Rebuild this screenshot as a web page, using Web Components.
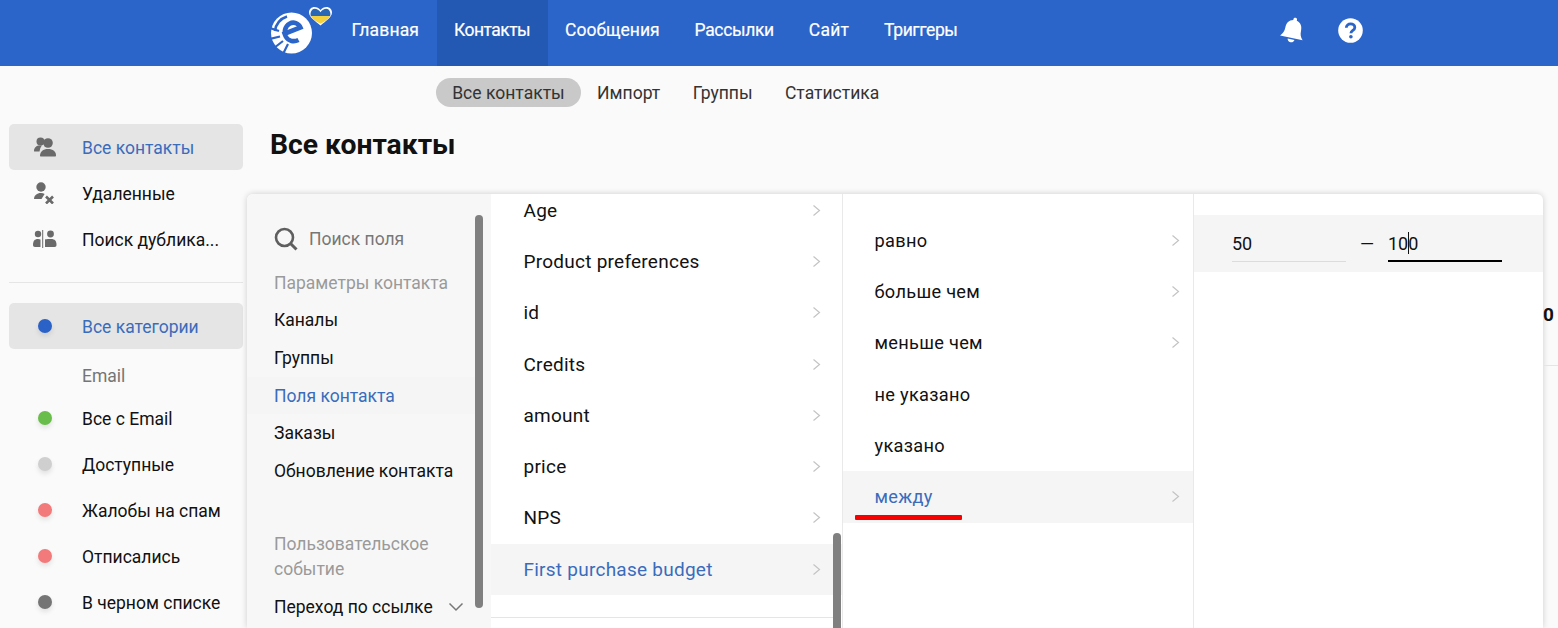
<!DOCTYPE html>
<html lang="ru"><head><meta charset="utf-8"><title>Все контакты</title>
<style>
html,body{margin:0;height:628px;overflow:hidden;background:#fafafa;font-family:Roboto,"Noto Sans",sans-serif}
</style></head><body>
<app-shell>
  <top-bar></top-bar>
  <sub-nav>
    <sub-link active>Все контакты</sub-link><sub-link>Импорт</sub-link><sub-link>Группы</sub-link><sub-link>Статистика</sub-link>
  </sub-nav>
  <side-menu slot="side">
    <side-item active icon="people">Все контакты</side-item>
    <side-item icon="deleted">Удаленные</side-item>
    <side-item icon="dupes">Поиск дублика...</side-item>
    <side-rule></side-rule>
    <side-item active dot="#2b62c8">Все категории</side-item>
    <side-head>Email</side-head>
    <side-item dot="#69bd4a">Все с Email</side-item>
    <side-item dot="#cfcfcf">Доступные</side-item>
    <side-item dot="#f27a7a">Жалобы на спам</side-item>
    <side-item dot="#f27a7a">Отписались</side-item>
    <side-item dot="#757575">В черном списке</side-item>
  </side-menu>
  <page-title slot="title">Все контакты</page-title>
  <filter-panel slot="panel">
    <field-nav slot="a"></field-nav>
    <opt-list slot="b" scrolled>
      <opt-row latin>Age</opt-row><opt-row latin>Product preferences</opt-row><opt-row latin>id</opt-row><opt-row latin>Credits</opt-row><opt-row latin>amount</opt-row><opt-row latin>price</opt-row><opt-row latin>NPS</opt-row><opt-row latin active>First purchase budget</opt-row>
    </opt-list>
    <opt-list slot="c">
      <opt-row>равно</opt-row><opt-row>больше чем</opt-row><opt-row>меньше чем</opt-row><opt-row plain>не указано</opt-row><opt-row plain>указано</opt-row><opt-row active marked>между</opt-row>
    </opt-list>
    <range-row slot="d"></range-row>
  </filter-panel>
</app-shell>
<script>
function def(name, css, html, extra){
  const tpl=document.createElement('template');
  tpl.innerHTML='<style>'+css+'</style>'+html;
  customElements.define(name,class extends HTMLElement{
    constructor(){super();this.attachShadow({mode:'open'}).appendChild(tpl.content.cloneNode(true));}
    connectedCallback(){ if(extra) extra(this,this.shadowRoot); }
  });
}
const G='#6a6a6a';
const ICON={
people:`<svg width="22" height="20" viewBox="0 0 22 20"><circle cx="6.500" cy="4.500" r="4" fill="${G}"/><path d="M0 14c0-3.500 2.700-5.500 5.500-5.500H8C6.500 10 6 11.800 5.500 14.500H1.500C.7 14.500 0 14.800 0 14z" fill="${G}"/><circle cx="14" cy="6" r="4.800" fill="${G}"/><path d="M7 19.500c-.6 0-1-.4-1-1 .4-4 3-6.500 8-6.500s8 2.500 8 6.500c0 .6-.4 1-1 1z" fill="${G}"/></svg>`,
deleted:`<svg width="22" height="22" viewBox="0 0 22 22"><circle cx="7" cy="5" r="4.700" fill="${G}"/><path d="M0 17c0-3.500 3-6 7-6 1.500 0 2.600.3 3.600.9L7.500 17z" fill="${G}"/><path d="M12 14.500l7 7m0-7l-7 7" stroke="${G}" stroke-width="2.600" fill="none"/></svg>`,
dupes:`<svg width="24" height="18" viewBox="0 0 24 18"><circle cx="5" cy="4" r="3.200" fill="${G}"/><path d="M0 15c0-4 1.500-6 5-6 1 0 1.600 .2 2.500 .6V17H2c-1.300 0-2-.8-2-2z" fill="${G}"/><circle cx="17.500" cy="4" r="3.400" fill="${G}"/><path d="M12 9.600c1-.4 2-.6 4-.6h2c4 0 5.500 2 5.500 6 0 1.300-.7 2-2 2H12z" fill="${G}"/><rect x="9.200" y="0" width="1" height="18" fill="${G}"/></svg>`
};
const CHEV='<svg width="9" height="13" viewBox="0 0 9 13"><path d="M1.500 1.500l6 5-6 5" fill="none" stroke="#c4c4c4" stroke-width="1.200"/></svg>';

def('app-shell',`
:host{display:block;height:628px}
.body{display:flex;align-items:flex-start}
.side{width:247px;flex:none;padding:17px 0 0 9px;box-sizing:border-box}
.main{flex:1;min-width:0}
`,`<slot></slot>
<div class="body">
 <div class="side"><slot name="side"></slot></div>
 <div class="main"><slot name="title"></slot><slot name="panel"></slot></div>
</div>`);

def('top-bar',`
:host{display:flex;height:66px;background:#2b65c9;color:#fff;font:400 17.5px/61px Roboto,sans-serif;padding-left:270px;box-sizing:border-box;align-items:stretch}
.logo{width:64px;flex:none;display:block}
nav{display:flex}
a{padding:0 17.500px;color:#fff;text-decoration:none;display:block;-webkit-text-stroke:.2px #fff}
a.on{background:#2459b3}
.tools{display:flex;align-items:center;margin-left:auto;padding:0 195px 6px 0;gap:32px}
svg{display:block}
`,`<svg class="logo" width="64" height="66" viewBox="0 0 64 66">
  <circle cx="21.500" cy="33" r="20.500" fill="#fff"/>
  <path d="M5 31A17 17 0 0 1 17 16.500" stroke="#2b65c9" stroke-width="2.600" fill="none"/>
  <path d="M0 28l9 3M0 39l10-2.500M4 48l9-7M13 54l5-10" stroke="#2b65c9" stroke-width="2.200" fill="none"/>
  <path d="M12.500 34.500 30.500 27.500c-1.800-4.500-7-6-11-3.800-4.500 2.500-6 8.800-3.500 13.300 2.500 4.300 8 5.200 12.500 3" fill="none" stroke="#2b65c9" stroke-width="4.600"/>
  <path d="M50.500 25.500C45 21 39 17 39 12.500c0-3.300 2.500-5.500 5.500-5.500 2.300 0 4.500 1.200 6 3 1.500-1.800 3.700-3 6-3 3 0 5.500 2.200 5.500 5.500C62 17 56 21 50.500 25.500z" fill="#fff"/>
  <path d="M40.800 16c-1-3.800 1.300-7.200 3.900-7.200 2.200 0 4.500 1.300 5.800 3.400 1.300-2.100 3.600-3.400 5.800-3.400 2.600 0 4.900 3.400 3.900 7.200z" fill="#2a67b4"/>
  <path d="M40.800 16h19.400c-1.200 2.700-5.200 5.500-9.700 7.800-4.500-2.300-8.500-5.100-9.700-7.800z" fill="#f4d13d"/>
</svg>
<nav><a style="letter-spacing:.15px">Главная</a><a class="on" style="letter-spacing:-.55px">Контакты</a><a>Сообщения</a><a style="letter-spacing:-.35px">Рассылки</a><a style="letter-spacing:.2px">Сайт</a><a style="letter-spacing:-.4px">Триггеры</a></nav>
<div class="tools">
<svg width="26" height="28" viewBox="0 0 26 28"><g transform="rotate(12 13 14)"><path d="M13 1.500c1 0 1.800.7 1.800 1.700v1C19 5.200 21 8.500 21 13c0 4 1 6.500 3.500 9H1.500C4 19.500 5 17 5 13c0-4.500 2-7.800 6.200-8.800v-1c0-1 .8-1.700 1.800-1.700z" fill="#fff"/><path d="M9.500 23.500h7c-.3 1.800-1.700 3-3.500 3s-3.200-1.200-3.500-3z" fill="#fff"/></g></svg>
<svg width="25" height="25" viewBox="0 0 25 25"><circle cx="12.500" cy="12.500" r="12.300" fill="#fff"/><path d="M8.300 9.800c0-2.400 1.900-3.900 4.300-3.900 2.500 0 4.200 1.500 4.200 3.500 0 3-3.900 3-3.900 5.900" fill="none" stroke="#2b65c9" stroke-width="2.800"/><circle cx="12.900" cy="18.800" r="1.800" fill="#2b65c9"/></svg>
</div>`);

def('sub-nav',`:host{display:flex;height:29px;margin-top:12px;padding-left:436px;align-items:stretch}`,`<slot></slot>`);
def('sub-link',`
:host{display:block;padding:0 16.200px;border-radius:15px;font:400 17.550px/30px Roboto,sans-serif;color:#333}
:host([active]){background:#c9c9c9}
`,`<slot></slot>`);

def('side-menu',`:host{display:block;width:234px}`,`<slot></slot>`);
def('side-item',`
:host{display:flex;height:46px;padding-top:2px;box-sizing:border-box;align-items:center;border-radius:5px;font:400 17.5px/44px Roboto,sans-serif;color:#111;white-space:nowrap}
:host([active]){background:#e5e5e5;color:#3a6cbc}
.ic{width:73px;flex:none;display:flex;justify-content:center;padding:0 1px 2px 0;box-sizing:border-box}
.ic span{width:14px;height:14px;border-radius:50%;display:block;box-shadow:0 3px 5px rgba(0,0,0,.1)}
svg{display:block}
`,`<div class="ic"></div><slot></slot>`,(el,sr)=>{
  const ic=sr.querySelector('.ic');
  if(el.hasAttribute('dot')) ic.innerHTML='<span style="background:'+el.getAttribute('dot')+'"></span>';
  else ic.innerHTML=ICON[el.getAttribute('icon')]||'';
});
def('side-rule',`:host{display:block;height:1px;background:#e5e5e5;margin:20px 0}`,``);
def('side-head',`:host{display:block;height:46px;margin:3px 0 -3px;padding-left:73px;font:400 17.5px/48px Roboto,sans-serif;color:#757575}`,`<slot></slot>`);

def('page-title',`:host{display:block;height:87px;padding:21px 0 0 23px;box-sizing:border-box;font:700 28.300px/34px Roboto,sans-serif;color:#111}`,`<slot></slot>`);

def('filter-panel',`
:host{display:block;position:relative;width:1296px;height:434px;background:#fff;border-radius:6px 6px 0 0;box-shadow:0 0 6px rgba(0,0,0,.18)}
.cols{display:grid;grid-template-columns:244px 351px 351px 350px;height:100%;overflow:hidden;border-radius:6px 6px 0 0}
.cols>div{min-width:0;height:100%;position:relative;overflow:hidden}
.c{border-left:1px solid #e9e9e9;box-sizing:border-box}
.behind{position:absolute;left:1296px;top:109px;width:15px;height:63px;box-sizing:border-box;font:700 19px/24px Roboto,sans-serif;color:#111;border-bottom:1px solid #e5e5e5}
`,`<div class="behind">0</div><div class="cols">
<div><slot name="a"></slot></div><div><slot name="b"></slot></div><div class="c"><slot name="c"></slot></div><div class="c"><slot name="d"></slot></div></div>`);

def('field-nav',`
:host{display:block;height:100%;background:#f7f7f7;font:400 17.5px/38px Roboto,sans-serif;color:#111;position:relative;padding:26px 0 0 27px;box-sizing:border-box}
.search{display:flex;align-items:center;height:38px;gap:11px;color:#777}
.search svg{flex:none}
.h{color:#9a9a9a;height:37px;margin-top:6px}
.h2{color:#9a9a9a;line-height:25px;margin:42px 0 6px;width:190px}
.row{height:37.800px;white-space:nowrap}
.on{color:#3a6cbc}
.hl{margin-left:-27px;padding-left:27px;background:#f5f5f5;width:206px}
.chev{position:absolute;left:201px;top:408px}
.bar{position:absolute;left:228px;top:21px;width:8px;height:393px;border-radius:4px;background:#808080}
`,`<div class="search"><svg width="24" height="24" viewBox="0 0 24 24"><circle cx="10.500" cy="10.500" r="8.500" fill="none" stroke="#5f5f5f" stroke-width="2.600"/><path d="M16.500 16.500l6 6" stroke="#5f5f5f" stroke-width="3"/></svg><span>Поиск поля</span></div>
<div class="h">Параметры контакта</div>
<div class="row">Каналы</div><div class="row">Группы</div><div class="row on hl">Поля контакта</div><div class="row">Заказы</div><div class="row">Обновление контакта</div>
<div class="h2">Пользовательское событие</div>
<div class="row">Переход по ссылке</div>
<svg class="chev" width="16" height="10" viewBox="0 0 16 10"><path d="M1.500 1.500l6.500 6.500 6.500-6.500" fill="none" stroke="#777" stroke-width="1.500"/></svg>
<div class="bar"></div>`);

def('opt-list',`
:host{display:flow-root;height:100%;position:relative;padding-top:21px;box-sizing:border-box;--pr:13px;--pl:31.500px}
:host([scrolled]){padding-top:0;--pr:21px;--pl:32.500px}
:host([scrolled]) .wrap{margin-top:-9px}
:host([scrolled]) .line,:host([scrolled]) .bar{display:block}
.line{display:none;position:absolute;left:0;right:9px;top:423px;height:1px;background:#e5e5e5}
.bar{display:none;position:absolute;right:1px;top:339px;width:8px;height:110px;border-radius:4px;background:#808080}
`,`<div class="wrap"><slot></slot></div><div class="line"></div><div class="bar"></div>`);
def('opt-row',`
:host{display:flex;height:51.300px;align-items:center;padding:0 var(--pr) 0 var(--pl);justify-content:space-between;font:400 18.200px/24px Roboto,sans-serif;letter-spacing:.3px;color:#111;position:relative}
:host([latin]){font-size:19px;letter-spacing:.25px}
:host([active]){background:#f5f5f5;color:#3a6cbc}
:host([plain]) .ch{display:none}
.ch{display:block;flex:none}
.mark{display:none;position:absolute;left:12px;top:44px;width:107px;height:5px;border-radius:1px;background:#f60000}
:host([marked]) .mark{display:block}
`,`<slot></slot><span class="ch">${CHEV}</span><i class="mark"></i>`);

def('range-row',`
:host{display:flex;height:57px;margin-top:21px;background:#f5f5f5;padding-left:38px;box-sizing:border-box;font:400 18px/24px Roboto,sans-serif;color:#111;align-items:flex-start}
.f{width:114px;height:47px;padding-top:17px;box-sizing:border-box;border-bottom:1px solid #dcdcdc}
.f.b{border-bottom:2px solid #000}
.dash{width:42px;padding-top:17px;text-align:center}
.cur{display:inline-block;width:1px;height:22px;background:#111;vertical-align:-4px;margin:0 -.5px}
`,`<div class="f">50</div><div class="dash">—</div><div class="f b">10<span class="cur"></span>0</div>`);
</script>
</body></html>
